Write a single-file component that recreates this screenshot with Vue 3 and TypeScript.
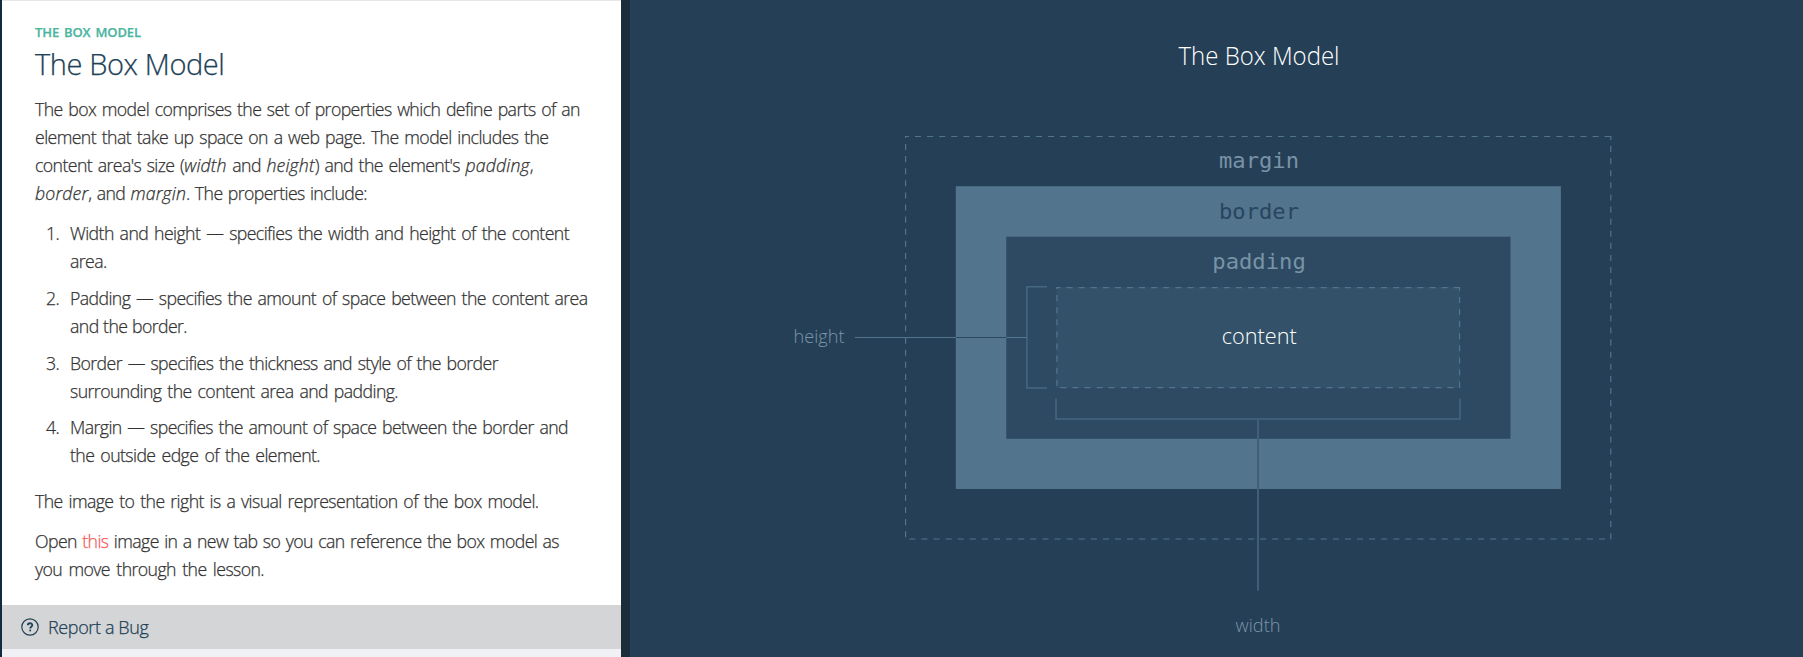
<script setup lang="ts">
interface Run {
  text: string
  kind?: 'em' | 'link'
}
interface Line {
  width: number
  runs: Run[]
}

const plain = (width: number, text: string): Line => ({ width, runs: [{ text }] })

const intro: Line[] = [
  plain(545, 'The box model comprises the set of properties which define parts of an'),
  plain(513.5, 'element that take up space on a web page. The model includes the'),
  {
    width: 498,
    runs: [
      { text: "content area's size (" },
      { text: 'width', kind: 'em' },
      { text: ' and ' },
      { text: 'height', kind: 'em' },
      { text: ") and the element's " },
      { text: 'padding', kind: 'em' },
      { text: ',' },
    ],
  },
  {
    width: 332,
    runs: [
      { text: 'border', kind: 'em' },
      { text: ', and ' },
      { text: 'margin', kind: 'em' },
      { text: '. The properties include:' },
    ],
  },
]

const items: Line[][] = [
  [plain(499, 'Width and height — specifies the width and height of the content'), plain(38, 'area.')],
  [plain(517.5, 'Padding — specifies the amount of space between the content area'), plain(117, 'and the border.')],
  [plain(428, 'Border — specifies the thickness and style of the border'), plain(328, 'surrounding the content area and padding.')],
  [plain(498, 'Margin — specifies the amount of space between the border and'), plain(250, 'the outside edge of the element.')],
]

const closing: Line[][] = [
  [plain(503.5, 'The image to the right is a visual representation of the box model.')],
  [
    {
      width: 524,
      runs: [
        { text: 'Open ' },
        { text: 'this', kind: 'link' },
        { text: ' image in a new tab so you can reference the box model as' },
      ],
    },
    plain(229, 'you move through the lesson.'),
  ],
]
</script>

<template>
  <div class="page">
    <aside class="lesson">
      <div class="body">
        <div class="eyebrow">THE BOX MODEL</div>
        <h1>The Box Model</h1>
        <p class="intro">
          <span v-for="(l, i) in intro" :key="i" class="line" :style="{ width: l.width + 'px' }"><span v-for="(r, j) in l.runs" :key="j" :class="r.kind">{{ r.text }}</span></span>
        </p>
        <ol>
          <li v-for="(item, n) in items" :key="n">
            <span class="num">{{ n + 1 }}.</span>
            <div>
              <span v-for="(l, i) in item" :key="i" class="line" :style="{ width: l.width + 'px' }">{{ l.runs[0].text }}</span>
            </div>
          </li>
        </ol>
        <p v-for="(para, k) in closing" :key="k" class="closing">
          <span v-for="(l, i) in para" :key="i" class="line" :style="{ width: l.width + 'px' }"><span v-for="(r, j) in l.runs" :key="j" :class="r.kind">{{ r.text }}</span></span>
        </p>
      </div>
      <footer>
        <svg width="18" height="18" viewBox="0 0 18 18">
          <circle cx="9" cy="9" r="8.2" fill="none" stroke="#204056" stroke-width="1.2" />
          <path d="M6.8 7.2C6.8 4.6 11.3 4.6 11.3 7.1C11.3 8.7 9.2 8.7 9.2 10.5" fill="none" stroke="#204056" stroke-width="1.8" />
          <rect x="8.3" y="11.6" width="1.8" height="1.7" fill="#204056" />
        </svg>
        <span>Report a Bug</span>
      </footer>
    </aside>
    <main>
      <svg class="diagram" width="1173" height="657" viewBox="630 0 1173 657">
        <g class="dash" stroke-dasharray="6.05 6.05">
          <path d="M905 136.5H1611" stroke-dashoffset="2.1" />
          <path d="M1610.8 136V540" stroke-dashoffset="2.1" />
          <path d="M905.6 136V540" stroke-dashoffset="4.1" />
          <path d="M905 539H1605" stroke-dashoffset="7.8" />
        </g>
        <rect x="955.8" y="186.2" width="605.1" height="302.8" fill="#52748d" />
        <rect x="1006.3" y="236.7" width="504.2" height="202.1" fill="#2d4a62" />
        <rect x="1056.3" y="287" width="403.8" height="101.2" fill="#335269" />
        <g class="dash" stroke-dasharray="6.05 6.05">
          <path d="M1056.3 287.7H1460" stroke-dashoffset="1.9" />
          <path d="M1459.6 287V388" stroke-dashoffset="2.2" />
          <path d="M1056.9 287V388" stroke-dashoffset="4" />
          <path d="M1056.3 387.6H1460" stroke-dashoffset="8.1" />
        </g>
        <g class="bracket">
          <path d="M1047 286.8H1026.9V387.9H1047" />
          <path d="M1056 398.5V419H1460V398.5" />
          <path d="M1258 419V590.7" stroke="#405e77" stroke-width="2" />
        </g>
        <path d="M855 337.5H1027" stroke="#52748d" />
        <path d="M956 337.5H1006.3" stroke="#2a4961" />
        <g class="sans">
          <text x="1178.5" y="65" font-size="25" textLength="161" lengthAdjust="spacingAndGlyphs" fill="#fff">The Box Model</text>
          <text x="1221.8" y="343.6" font-size="22" textLength="75" lengthAdjust="spacingAndGlyphs" fill="#fff">content</text>
          <text x="793.5" y="342.8" font-size="18" textLength="51" lengthAdjust="spacingAndGlyphs" fill="#7a96ab">height</text>
          <text x="1235.5" y="632.3" font-size="18" textLength="45" lengthAdjust="spacingAndGlyphs" fill="#7a96ab">width</text>
        </g>
        <g class="mono">
          <text x="1219" y="168" textLength="80" lengthAdjust="spacingAndGlyphs" fill="#7893a6">margin</text>
          <text x="1219" y="219.2" textLength="80" lengthAdjust="spacingAndGlyphs" fill="#284560">border</text>
          <text x="1212.3" y="269" textLength="93.5" lengthAdjust="spacingAndGlyphs" fill="#7893a6">padding</text>
        </g>
      </svg>
    </main>
  </div>
</template>

<style>
body {
  margin: 0;
}
</style>

<style scoped>
.page {
  display: flex;
  width: 1803px;
  height: 657px;
  overflow: hidden;
  background: #253f56;
  font-family: "Open Sans", "Noto Sans", sans-serif;
}
.lesson {
  box-sizing: border-box;
  width: 621px;
  flex: none;
  display: flex;
  flex-direction: column;
  border-left: 2px solid #112a3d;
  background: #f0f1f4;
}
.body {
  box-sizing: border-box;
  height: 605px;
  border-top: 1px solid #e6e6e6;
  padding: 21px 0 0 33px;
  background: #fff;
  color: #333;
  font-size: 17.7px;
  letter-spacing: -0.58px;
  font-weight: 300;
  line-height: 28px;
  -webkit-text-stroke: 0.25px currentColor;
}
.eyebrow {
  height: 20px;
  line-height: 20px;
  width: 106px;
  font-size: 13px;
  letter-spacing: -0.1px;
  font-weight: 600;
  color: #4bb59f;
  text-align-last: justify;
  white-space: nowrap;
}
h1 {
  margin: 0;
  height: 44px;
  line-height: 44px;
  width: 189.5px;
  font-size: 29px;
  letter-spacing: -0.4px;
  font-weight: 300;
  color: #204056;
  text-align-last: justify;
  white-space: nowrap;
}
p,
ol {
  margin: 0;
  padding: 0;
}
.intro {
  padding-top: 9px;
}
.line {
  display: block;
  height: 28px;
  text-align-last: justify;
  white-space: nowrap;
}
.em {
  font-style: italic;
  letter-spacing: 0.15px;
}
.link {
  color: #f65a5b;
}
ol {
  list-style: none;
  margin-top: 12px;
}
li {
  display: flex;
  height: 56px;
  margin-bottom: 8.8px;
}
.num {
  width: 25px;
  margin-right: 10px;
  box-sizing: border-box;
  padding-left: 11px;
}
.closing {
  margin-bottom: 12px;
}
ol + .closing {
  margin-top: 18px;
}
footer {
  height: 44px;
  display: flex;
  align-items: center;
  gap: 9px;
  padding-left: 19px;
  background: #d4d5d7;
  color: #204056;
  font-size: 18px;
  letter-spacing: -0.38px;
  font-weight: 300;
  -webkit-text-stroke: 0.25px currentColor;
}
footer svg {
  flex: none;
}
main {
  box-sizing: border-box;
  width: 1182px;
  border-left: 9px solid #1a2d3b;
}
.diagram {
  display: block;
}
.dash {
  fill: none;
  stroke: #52748d;
  stroke-width: 1.2;
}
.bracket {
  fill: none;
  stroke: #466780;
  stroke-width: 1.5;
}
.sans {
  font-weight: 300;
}
.mono {
  font-family: "DejaVu Sans Mono", monospace;
  font-size: 21.5px;
}
</style>
